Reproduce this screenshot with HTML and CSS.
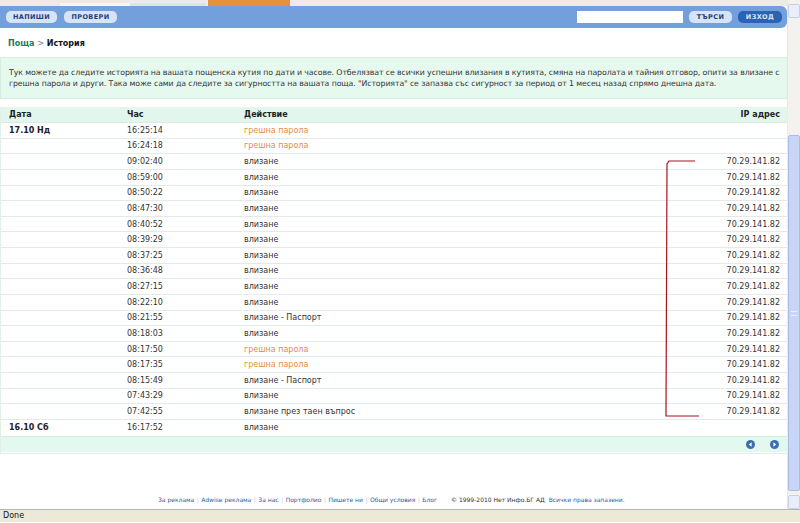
FILE: index.html
```html
<!DOCTYPE html>
<html>
<head>
<meta charset="utf-8">
<link rel="stylesheet" href="styles.css">
</head>
<body>
<div class="window">
  <div class="viewport">
    <div class="page">
      <div class="tabstrip">
        <span class="tab t1"></span><span class="tab t2"></span><span class="tab t3"></span>
      </div>
      <div class="topbar">
        <div class="left">
          <span class="btn">НАПИШИ</span>
          <span class="btn">ПРОВЕРИ</span>
        </div>
        <div class="right">
          <span class="search"></span>
          <span class="btn">ТЪРСИ</span>
          <span class="btn dark">ИЗХОД</span>
        </div>
      </div>
      <div class="crumbs"><span class="crumb-link">Поща</span> <span class="gt">&gt;</span> История</div>
      <div class="info">Тук можете да следите историята на вашата пощенска кутия по дати и часове. Отбелязват се всички успешни влизания в кутията, смяна на паролата и тайния отговор, опити за влизане с<br>грешна парола и други. Така може сами да следите за сигурността на вашата поща. "Историята" се запазва със сигурност за период от 1 месец назад спрямо днешна дата.</div>
      <div class="history">
        <div class="row head"><span class="c-date">Дата</span><span class="c-time">Час</span><span class="c-act">Действие</span><span class="c-ip">IP адрес</span></div>
        <div class="row"><span class="c-date">17.10 Нд</span><span class="c-time">16:25:14</span><span class="c-act bad">грешна парола</span><span class="c-ip"></span></div>
        <div class="row"><span class="c-date"></span><span class="c-time">16:24:18</span><span class="c-act bad">грешна парола</span><span class="c-ip"></span></div>
        <div class="row"><span class="c-date"></span><span class="c-time">09:02:40</span><span class="c-act">влизане</span><span class="c-ip">70.29.141.82</span></div>
        <div class="row"><span class="c-date"></span><span class="c-time">08:59:00</span><span class="c-act">влизане</span><span class="c-ip">70.29.141.82</span></div>
        <div class="row"><span class="c-date"></span><span class="c-time">08:50:22</span><span class="c-act">влизане</span><span class="c-ip">70.29.141.82</span></div>
        <div class="row"><span class="c-date"></span><span class="c-time">08:47:30</span><span class="c-act">влизане</span><span class="c-ip">70.29.141.82</span></div>
        <div class="row"><span class="c-date"></span><span class="c-time">08:40:52</span><span class="c-act">влизане</span><span class="c-ip">70.29.141.82</span></div>
        <div class="row"><span class="c-date"></span><span class="c-time">08:39:29</span><span class="c-act">влизане</span><span class="c-ip">70.29.141.82</span></div>
        <div class="row"><span class="c-date"></span><span class="c-time">08:37:25</span><span class="c-act">влизане</span><span class="c-ip">70.29.141.82</span></div>
        <div class="row"><span class="c-date"></span><span class="c-time">08:36:48</span><span class="c-act">влизане</span><span class="c-ip">70.29.141.82</span></div>
        <div class="row"><span class="c-date"></span><span class="c-time">08:27:15</span><span class="c-act">влизане</span><span class="c-ip">70.29.141.82</span></div>
        <div class="row"><span class="c-date"></span><span class="c-time">08:22:10</span><span class="c-act">влизане</span><span class="c-ip">70.29.141.82</span></div>
        <div class="row"><span class="c-date"></span><span class="c-time">08:21:55</span><span class="c-act">влизане - Паспорт</span><span class="c-ip">70.29.141.82</span></div>
        <div class="row"><span class="c-date"></span><span class="c-time">08:18:03</span><span class="c-act">влизане</span><span class="c-ip">70.29.141.82</span></div>
        <div class="row"><span class="c-date"></span><span class="c-time">08:17:50</span><span class="c-act bad">грешна парола</span><span class="c-ip">70.29.141.82</span></div>
        <div class="row"><span class="c-date"></span><span class="c-time">08:17:35</span><span class="c-act bad">грешна парола</span><span class="c-ip">70.29.141.82</span></div>
        <div class="row"><span class="c-date"></span><span class="c-time">08:15:49</span><span class="c-act">влизане - Паспорт</span><span class="c-ip">70.29.141.82</span></div>
        <div class="row"><span class="c-date"></span><span class="c-time">07:43:29</span><span class="c-act">влизане</span><span class="c-ip">70.29.141.82</span></div>
        <div class="row"><span class="c-date"></span><span class="c-time">07:42:55</span><span class="c-act">влизане през таен въпрос</span><span class="c-ip">70.29.141.82</span></div>
        <div class="row last"><span class="c-date">16.10 Сб</span><span class="c-time">16:17:52</span><span class="c-act">влизане</span><span class="c-ip"></span></div>
        <div class="pager">
          <svg class="arrow" width="9" height="9" viewBox="0 0 9 9"><circle cx="4.5" cy="4.5" r="4.5" fill="#3d6fb0"/><path d="M5.6 2.3 L2.8 4.5 L5.6 6.7 Z" fill="#fff"/></svg>
          <svg class="arrow" width="9" height="9" viewBox="0 0 9 9"><circle cx="4.5" cy="4.5" r="4.5" fill="#3d6fb0"/><path d="M3.4 2.3 L6.2 4.5 L3.4 6.7 Z" fill="#fff"/></svg>
        </div>
      </div>
      <div class="spacer"></div>
      <div class="footer">
        <span class="flink">За реклама</span><span class="sep">|</span><span class="flink">Adwise реклама</span><span class="sep">|</span><span class="flink">За нас</span><span class="sep">|</span><span class="flink">Портфолио</span><span class="sep">|</span><span class="flink">Пишете ни</span><span class="sep">|</span><span class="flink">Общи условия</span><span class="sep">|</span><span class="flink">Блог</span>
        <span class="copy">© 1999-2010 Нет Инфо.БГ АД</span><span class="flink">Всички права запазени.</span>
      </div>
      <svg class="mark" width="40" height="262" viewBox="0 0 40 262"><path d="M31 1 L5 1 L3 4 L2 256 L35 256" fill="none" stroke="#a8141c" stroke-width="1.2"/></svg>
    </div>
    <div class="scrollbar">
      <div class="sb-btn up"></div>
      <div class="sb-track"><div class="sb-thumb"><span class="grip"></span></div></div>
      <div class="sb-btn down"></div>
    </div>
  </div>
  <div class="status">Done</div>
</div>
</body>
</html>
```
FILE: styles.css
```css
* { box-sizing: border-box; }
html, body { margin: 0; padding: 0; }
body {
  width: 800px;
  height: 523px;
  overflow: hidden;
  background: #fff;
  font-family: "DejaVu Sans", Verdana, sans-serif;
  font-size: 8px;
  color: #333;
}
.window { display: flex; flex-direction: column; height: 523px; }
.viewport { display: flex; height: 510px; border-bottom: 1px solid #b9b6ae; }
.page {
  position: relative;
  flex: 1;
  display: flex;
  flex-direction: column;
  min-width: 0;
}
.tabstrip {
  height: 6px;
  background: #ecebea;
  display: flex;
  align-items: flex-end;
}
.tab { height: 3px; }
.t1 { width: 70px; margin-left: 60px; background: #f4f6f4; }
.t2 { width: 76px; background: #d2ecd8; }
.t3 { width: 82px; margin-left: 2px; height: 6px; background: #e58f3f; }
.topbar {
  height: 22px;
  background: #739fdd;
  border-radius: 0 6px 6px 0;
  display: flex;
  align-items: center;
  justify-content: space-between;
  padding: 0 5px 0 6px;
}
.left, .right { display: flex; align-items: center; gap: 7px; }
.right { gap: 6px; }
.btn {
  height: 12px;
  line-height: 12px;
  padding: 0 9px;
  border-radius: 5px;
  background: #d6e4f7;
  color: #1e3d78;
  font-weight: bold;
  font-size: 6.5px;
  letter-spacing: 0.4px;
}
.left .btn:first-child { width: 51px; text-align: center; padding: 0; }
.left .btn:last-child { width: 53px; text-align: center; padding: 0; }
.right .btn { width: 43px; padding: 0; text-align: center; }
.right .btn.dark { width: 44px; background: #2c62b2; color: #d9e6f8; }
.search { width: 106px; height: 12px; background: #fff; margin-right: 0; }
.crumbs {
  padding: 11px 8px 8px;
  line-height: 10px;
  height: 29px;
  font-weight: bold;
  color: #111;
}
.crumb-link { color: #1d7a58; }
.gt { color: #777; font-weight: normal; }
.info {
  height: 42px;
  background: #e6f9ef;
  border: 1px solid #d3eee0;
  padding: 9px 8px;
  line-height: 11px;
  font-size: 7.8px;
  letter-spacing: -0.1px;
  color: #333;
  white-space: nowrap;
  width: 788px;
}
.history {
  margin-top: 8px;
  width: 788px;
  border: 1px solid #e1f1e9;
  border-top: none;
}
.row {
  display: flex;
  align-items: center;
  height: 15.63px;
  border-bottom: 1px solid #e3ebea;
  padding: 0 7px 0 8px;
}
.row.head {
  height: 16px;
  background: #e3f6ed;
  border-bottom: 1px solid #d7ede2;
  font-weight: bold;
  color: #222;
}
.row.last { border-bottom: none; }
.c-date { width: 118px; font-weight: bold; color: #222; }
.c-time { width: 117px; }
.c-act { flex: 1; }
.c-ip { width: 120px; text-align: right; }
.head .c-time, .head .c-act { font-weight: bold; }
.bad { color: #e58c3e; }
.pager {
  height: 16px;
  background: #e3f8ee;
  border-top: 1px solid #d3eee0;
  display: flex;
  justify-content: flex-end;
  align-items: center;
  gap: 15px;
  padding-right: 8px;
  margin-bottom: 1px;
}
.arrow { display: block; }
.spacer { flex: 1; }
.footer {
  height: 12px;
  margin-bottom: 3px;
  padding-left: 158px;
  font-size: 6px;
  line-height: 12px;
  white-space: nowrap;
  color: #444;
}
.flink { color: #2d5a9c; }
.sep { color: #c8c8c8; margin: 0 2.5px; }
.copy { margin-left: 12px; margin-right: 4px; color: #333; }
.mark { position: absolute; left: 664px; top: 160px; }
.scrollbar {
  width: 13px;
  background: #f3f2ee;
  display: flex;
  flex-direction: column;
  border-left: 1px solid #e8e6e0;
}
.sb-btn { height: 14px; background: #e9eefa; border: 1px solid #c4d0ea; border-radius: 2px; }
.sb-btn.up { margin-top: 4px; }
.sb-track { flex: 1; padding-top: 117px; padding-bottom: 4px; display: flex; }
.sb-thumb {
  flex: 1;
  background: #c7d6f6;
  border: 1px solid #a9bde8;
  border-radius: 2px;
  display: flex;
  align-items: center;
  justify-content: center;
}
.grip { width: 6px; height: 5px; border-top: 1px solid #eef3fd; border-bottom: 1px solid #eef3fd; }
.status {
  height: 12px;
  background: #ece9d8;
  font-family: "DejaVu Sans", Tahoma, sans-serif;
  font-size: 8px;
  line-height: 12px;
  padding-left: 3px;
  color: #111;
}
```
